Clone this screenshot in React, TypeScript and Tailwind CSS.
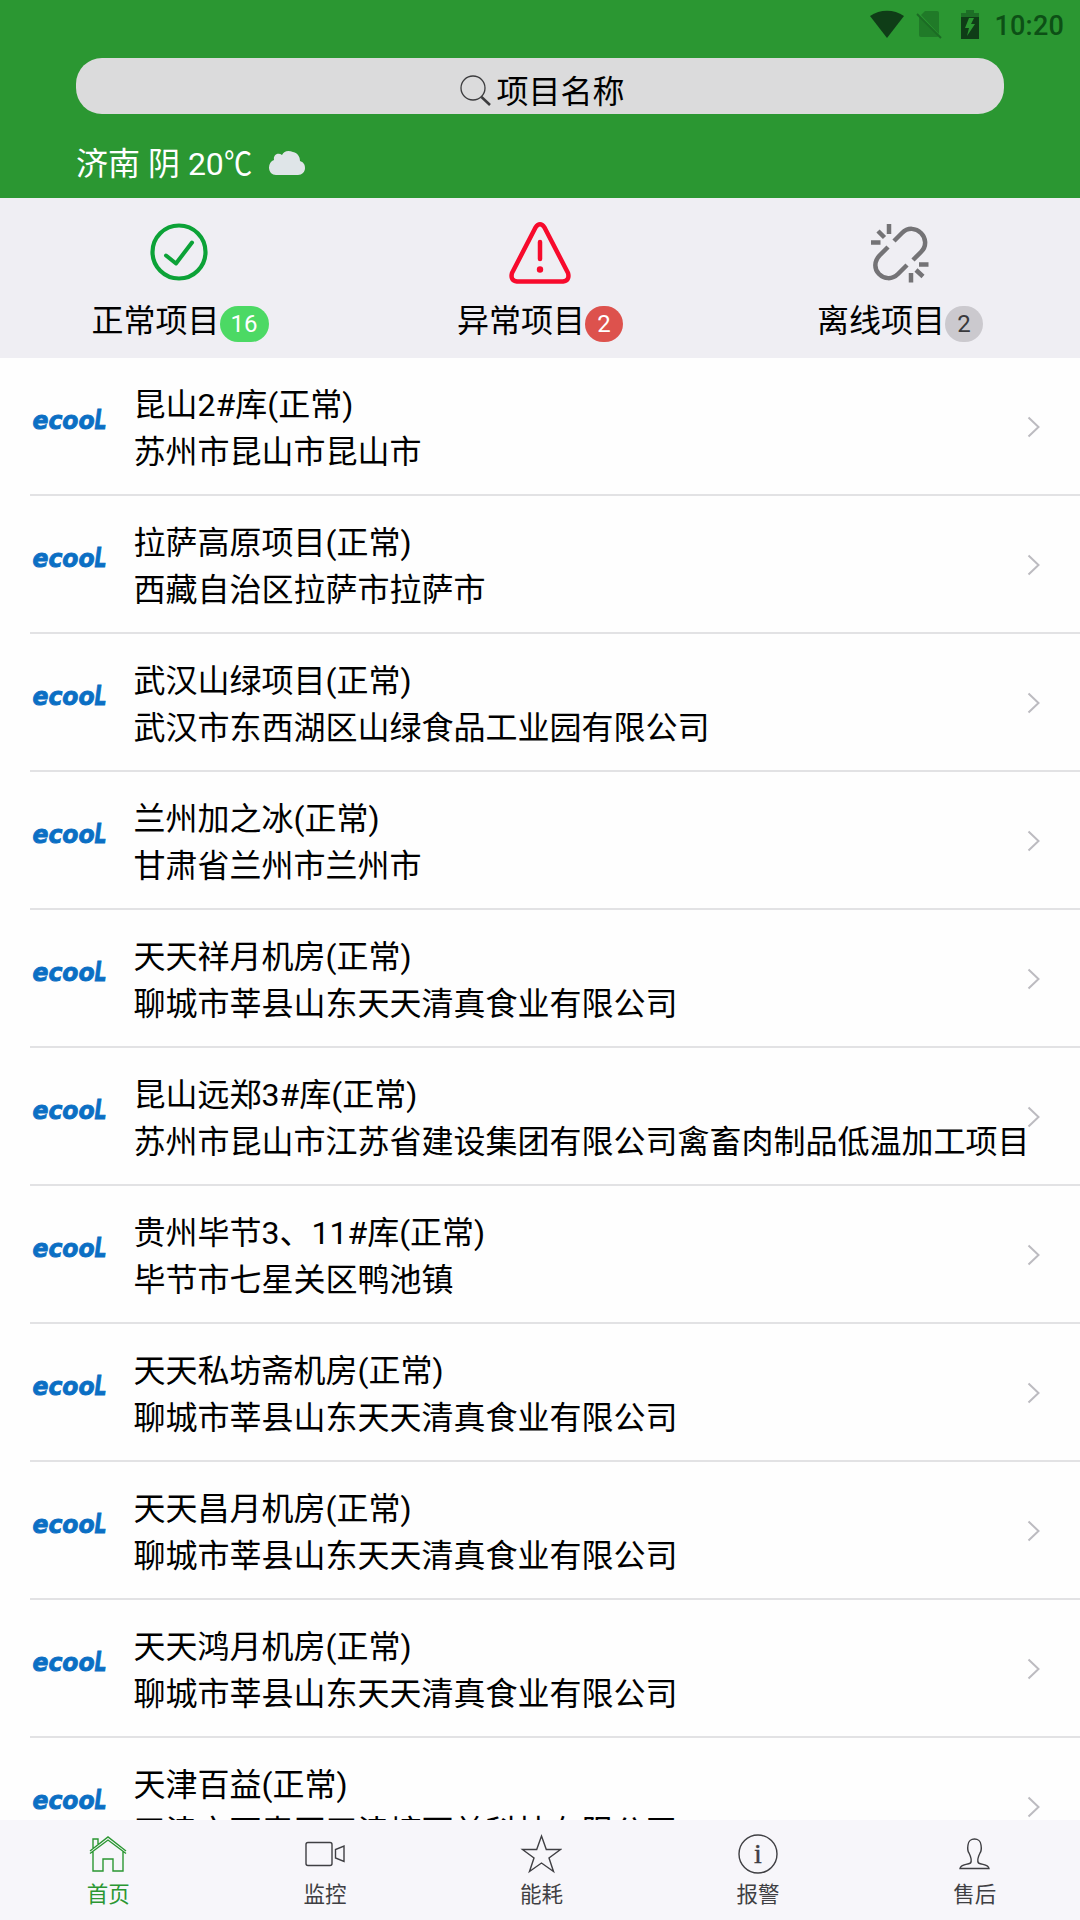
import { ReactNode } from "react";

interface Project {
  name: string;
  address: string;
}

const PROJECTS: Project[] = [
  { name: "昆山2#库(正常)", address: "苏州市昆山市昆山市" },
  { name: "拉萨高原项目(正常)", address: "西藏自治区拉萨市拉萨市" },
  { name: "武汉山绿项目(正常)", address: "武汉市东西湖区山绿食品工业园有限公司" },
  { name: "兰州加之冰(正常)", address: "甘肃省兰州市兰州市" },
  { name: "天天祥月机房(正常)", address: "聊城市莘县山东天天清真食业有限公司" },
  { name: "昆山远郑3#库(正常)", address: "苏州市昆山市江苏省建设集团有限公司禽畜肉制品低温加工项目" },
  { name: "贵州毕节3、11#库(正常)", address: "毕节市七星关区鸭池镇" },
  { name: "天天私坊斋机房(正常)", address: "聊城市莘县山东天天清真食业有限公司" },
  { name: "天天昌月机房(正常)", address: "聊城市莘县山东天天清真食业有限公司" },
  { name: "天天鸿月机房(正常)", address: "聊城市莘县山东天天清真食业有限公司" },
  { name: "天津百益(正常)", address: "天津市西青区天津塘百益科技有限公司" },
];

function StatusBar() {
  return (
    <div className="flex h-[50px] items-center justify-end pr-4 text-[#0d5016]">
      <svg width="36" height="30" viewBox="0 0 36 30" className="mr-[11px]">
        <path d="M1 6C11-1 25-1 35 6L18 28Z" fill="#0f3d17" />
      </svg>
      <svg width="27" height="30" viewBox="0 0 27 30" className="mr-[17px]">
        <path d="M9 1H21Q23 1 23 3V24L5 5ZM3 6L23 26Q22 27 20 27H5Q3 27 3 25Z" fill="#207a28" />
        <path d="M1 4L25 28" stroke="#1c6c24" strokeWidth="2" />
      </svg>
      <svg width="20" height="30" viewBox="0 0 20 30" className="mr-[14px]">
        <path d="M6 0H14V3H19V8H1V3H6Z" fill="#1d6f26" />
        <path d="M1 7H19V29H1Z" fill="#0f3d17" />
        <path d="M9 8L5 18H9L7 26L15 14H11L14 8Z" fill="#2b9731" />
      </svg>
      <span className="mt-0.5 text-[27px] font-medium leading-none tracking-[0.2px]">10:20</span>
    </div>
  );
}

function Header() {
  return (
    <header className="h-[198px] shrink-0 bg-[#2b9732]">
      <StatusBar />
      <div className="mx-[76px] mt-2 flex h-14 items-center justify-center rounded-[26px] bg-[#dbdbdc] pl-[5px]">
        <svg width="32" height="32" viewBox="0 0 32 32" className="mr-1 mt-2.5" fill="none" stroke="#3c3c3e">
          <circle cx="13" cy="13" r="12" strokeWidth="1.3" />
          <path d="M21.500 22L30 30" strokeWidth="2.600" />
        </svg>
        <span className="mt-[11px] text-[32px] leading-[40px]">项目名称</span>
      </div>
      <div className="mx-[76px] mt-[30px] flex items-center text-white">
        <span className="text-[32px] leading-[40px]">
          济南 阴 20<span className="-mr-1 inline-block origin-left scale-x-[0.88]">℃</span>
        </span>
        <svg width="36" height="24" viewBox="0 0 36 24" className="-mt-0.5 ml-[17px]">
          <path
            d="M7 24C3 24 0 21 0 16.500C0 13 2 10 5 9C4 4 9 1 13 4C15 0 19-1 24 1C29 2 31 6 31 10C34 11 36 13 36 17C36 21 33 24 29 24Z"
            fill="#dfe5e8"
          />
        </svg>
      </div>
    </header>
  );
}

function Stat({ label, count, badge, children }: { label: string; count: number; badge: string; children: ReactNode }) {
  return (
    <div className="flex flex-1 flex-col items-center">
      <div className="mt-[21px] flex h-[64px] items-center">{children}</div>
      <div className="mt-[17px] flex items-center">
        <span className="text-[32px] leading-[40px]">{label}</span>
        <span
          className={`mt-1.5 flex h-9 min-w-[38px] items-center justify-center rounded-full px-[11px] text-[24px] leading-none ${badge}`}
        >
          {count}
        </span>
      </div>
    </div>
  );
}

function Stats() {
  return (
    <section className="flex h-[160px] shrink-0 bg-[#efeef3]">
      <Stat label="正常项目" count={16} badge="bg-[#4cd964] text-white">
        <svg width="60" height="64" viewBox="0 0 60 64" fill="none" stroke="#0ca237">
          <circle cx="29" cy="33" r="26.500" strokeWidth="4.200" />
          <path d="M16 36.500L26 44.500L42 23.500" strokeWidth="4" strokeLinecap="round" strokeLinejoin="round" />
        </svg>
      </Stat>
      <Stat label="异常项目" count={2} badge="bg-[#dd524d] text-white">
        <svg width="64" height="66" viewBox="0 0 64 66" fill="none" stroke="#f70a2c" strokeLinecap="round">
          <path
            d="M27.500 9.500Q32 3 36.500 9.500L60 55Q62 62.500 55 63.500H9Q2 62.500 4 55Z"
            strokeWidth="4.500"
            strokeLinejoin="round"
          />
          <path d="M32 24V41" strokeWidth="4.500" />
          <circle cx="32" cy="51.500" r="3.200" fill="#f70a2c" stroke="none" />
        </svg>
      </Stat>
      <Stat label="离线项目" count={2} badge="bg-[#cbc9ce] text-[#39393c]">
        <svg width="60" height="64" viewBox="0 0 60 64" fill="none" stroke="#747376" strokeWidth="4.500">
          <path d="M24 22L32 14C38 8 46 9 51 14C56 19 57 27 51 33L43 41" />
          <path d="M18 28L10 36C4 42 4 50 9 55C14 60 22 61 28 55L37 46" />
          <path d="M19 5V15M8 12L14.500 18.500M1 23.500H10.500M49 45.500H58.500M46 51L53 57.500M41 54V63.500" />
        </svg>
      </Stat>
    </section>
  );
}

function Logo() {
  return (
    <svg
      width="78"
      height="44"
      viewBox="0 0 78 44"
      className="ml-8 mt-[42px] shrink-0 overflow-visible font-['DejaVu_Sans'] font-bold italic"
      fill="#0b6fc4"
      stroke="#0b6fc4"
      strokeWidth="0.9"
    >
      <text x="0.5" y="29.3" fontSize="25" textLength="62" lengthAdjust="spacingAndGlyphs">
        ecoo
      </text>
      <text x="62.5" y="29.3" fontSize="26.5" textLength="12" lengthAdjust="spacingAndGlyphs">
        L
      </text>
    </svg>
  );
}

function ProjectRow({ name, address }: Project) {
  return (
    <li className="relative flex h-[138px] shrink-0">
      <Logo />
      <div className="ml-[23.500px] mt-6 whitespace-nowrap text-[32px] leading-[47px]">
        <p>{name}</p>
        <p>{address}</p>
      </div>
      <svg width="14" height="22" viewBox="0 0 14 22" className="absolute right-[39px] top-[58px]" fill="none">
        <path d="M1.500 1.500L11.500 11L1.500 20.500" stroke="#bcbbc0" strokeWidth="2" />
      </svg>
      <div className="absolute bottom-0 left-[30px] right-0 h-0.5 bg-[#e2e2e4]" />
    </li>
  );
}

function Tab({ label, active, children }: { label: string; active?: boolean; children: ReactNode }) {
  return (
    <div className={`flex flex-1 flex-col items-center ${active ? "text-[#2b9732]" : "text-[#3f3f43]"}`}>
      <svg width="42" height="42" viewBox="0 0 42 42" className="mt-[13px]" fill="none" stroke="currentColor" strokeWidth="1.400">
        {children}
      </svg>
      <span className="mt-[5px] text-[21.500px] leading-[30px]">{label}</span>
    </div>
  );
}

function TabBar() {
  return (
    <nav className="flex h-[100px] w-[1083px] shrink-0 bg-[#f7f6fa]">
      <Tab label="首页" active>
        <path d="M3 18L21 4L39 18M6 18V38H16V26H26V38H36V18M3 20.500L21 7L39 20.500M6 15V6H11V11" />
      </Tab>
      <Tab label="监控">
        <rect x="2" y="9.500" width="26" height="23" rx="2" />
        <path d="M40 13V28.500L31.500 25V16.500Z" />
      </Tab>
      <Tab label="能耗">
        <path d="M21.500 3L26.300 16.500H40.500L29 25L33.500 38.500L21.500 30L9.500 38.500L14 25L2.500 16.500H16.700Z" />
      </Tab>
      <Tab label="报警">
        <circle cx="21" cy="21" r="19" />
        <text
          x="21"
          y="30"
          textAnchor="middle"
          fontSize="28"
          fill="currentColor"
          strokeWidth="0.4"
          className="font-['Liberation_Serif']"
        >
          i
        </text>
      </Tab>
      <Tab label="售后">
        <path d="M16.500 30C18.500 27 16.500 23 15 20C13.500 18 13.500 15 14 12C14.500 4 26.500 4 27 12C27.500 15 27.500 18 26 20C24.500 23 22.500 27 24.500 30C28.500 32 34.500 31 35 35.500H6C6.500 31 12.500 32 16.500 30Z" />
      </Tab>
    </nav>
  );
}

export default function App() {
  return (
    <div className="flex h-[1920px] w-[1080px] flex-col overflow-hidden bg-[#fefefe] font-['Roboto','Noto_Sans_CJK_SC',sans-serif] text-black">
      <Header />
      <Stats />
      <ul className="flex min-h-0 flex-1 flex-col overflow-hidden">
        {PROJECTS.map((project) => (
          <ProjectRow key={project.name} {...project} />
        ))}
      </ul>
      <TabBar />
    </div>
  );
}
